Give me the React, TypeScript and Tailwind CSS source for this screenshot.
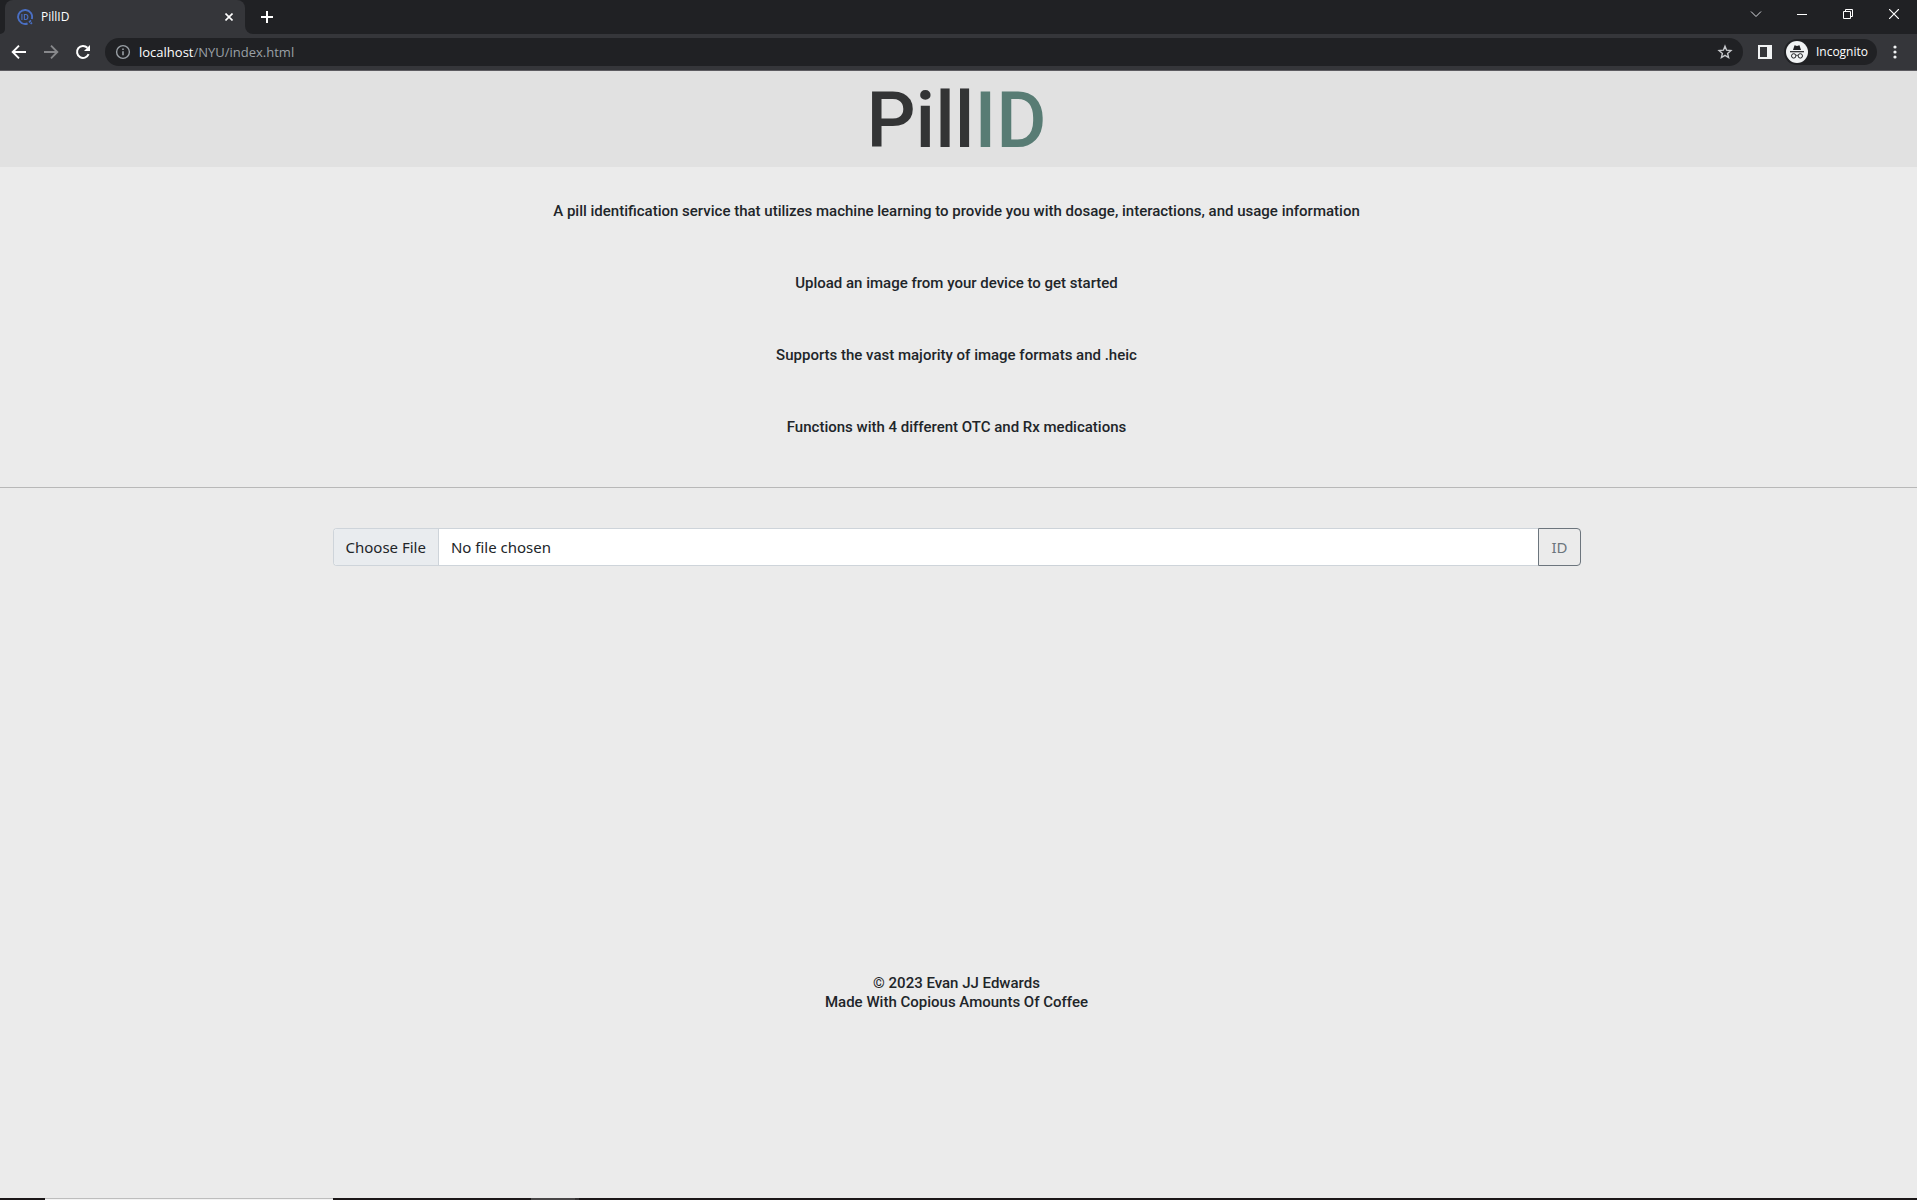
import { useState } from "react";
import type { ReactNode } from "react";

/* ── Icons ──────────────────────────────────────────────────────────── */
function Favicon() {
  return (
    <svg width="16" height="16" viewBox="0 0 16 16" fill="none" stroke="#4a6fc3">
      <path d="M14.8 10A7 7 0 1 0 10.6 14.5" strokeWidth="1.9" />
      <path d="M12 13.4l2-2M13.6 15l1.4-1.4" strokeWidth="1.6" />
      <path d="M4.9 5v6M7.4 5.5v5h1.3c1.4 0 2.2-1 2.2-2.5s-.8-2.5-2.2-2.5z" strokeWidth="1.1" />
    </svg>
  );
}

function BackIcon({ flip = false }: { flip?: boolean }) {
  return (
    <svg width="16" height="16" viewBox="0 0 16 16" fill="none" stroke="currentColor" strokeWidth="1.9" className={flip ? "-scale-x-100" : ""}>
      <path d="M15 8H2.5M8 1.7L1.7 8L8 14.3" />
    </svg>
  );
}

function ReloadIcon() {
  return (
    <svg width="16" height="16" viewBox="0 0 16 16" fill="none">
      <path d="M13.6 10.2A6 6 0 1 1 12.4 3.8" stroke="currentColor" strokeWidth="2" />
      <path d="M15 1v6H9z" fill="currentColor" />
    </svg>
  );
}

function InfoIcon() {
  return (
    <svg width="16" height="16" viewBox="0 0 16 16" fill="none" stroke="#9aa0a6">
      <circle cx="8" cy="8" r="6.4" strokeWidth="1.4" />
      <path d="M8 7.2v4M8 4.4v1.6" strokeWidth="1.6" />
    </svg>
  );
}

function StarIcon() {
  return (
    <svg width="16" height="16" viewBox="0 0 16 16" fill="none" stroke="#c7c9cc" strokeWidth="1.4">
      <path d="M8 2.2l1.6 4 4.3.4-3.3 2.8 1 4.2L8 11.4l-3.6 2.2 1-4.2-3.3-2.8 4.3-.4z" />
    </svg>
  );
}

function IncognitoIcon() {
  return (
    <svg width="22" height="22" viewBox="0 0 22 22" fill="none">
      <circle cx="11" cy="11" r="11" fill="#f1f3f4" />
      <path d="M7 9L8.3 4.9c.2-.5.6-.6 1-.5l1.7.5 1.7-.5c.5-.1.9 0 1 .5L15 9z" fill="#202124" />
      <path d="M4 10.7h14" stroke="#202124" strokeWidth="1.2" />
      <circle cx="7.7" cy="14.9" r="2.2" stroke="#202124" strokeWidth="1" />
      <circle cx="14.3" cy="14.9" r="2.2" stroke="#202124" strokeWidth="1" />
      <path d="M9.9 14.6c.7-.5 1.5-.5 2.2 0" stroke="#202124" strokeWidth="1" />
    </svg>
  );
}

/* ── Browser frame ──────────────────────────────────────────────────── */
function IconButton({ label, className = "", children }: { label: string; className?: string; children: ReactNode }) {
  return (
    <button aria-label={label} className={`flex items-center justify-center ${className}`}>
      {children}
    </button>
  );
}

function TabStrip() {
  return (
    <div className="flex h-[34px] bg-[#202124] text-white">
      <div className="flex w-[5px] items-end bg-[#35363a]">
        <span className="h-full w-full rounded-br-lg bg-[#202124]" />
      </div>
      <div className="flex w-60 items-center rounded-t-lg bg-[#35363a] pl-3 pr-2">
        <Favicon />
        <span className="ml-2 flex-1 text-xs">PillID</span>
        <IconButton label="Close tab" className="size-4">
          <svg width="8" height="8" viewBox="0 0 8 8" stroke="currentColor" strokeWidth="1.6">
            <path d="M.5.5l7 7M7.5.5l-7 7" />
          </svg>
        </IconButton>
      </div>
      <div className="w-2 bg-[#35363a]">
        <span className="block h-full w-full rounded-bl-lg bg-[#202124]" />
      </div>
      <IconButton label="New tab" className="w-7">
        <svg width="12" height="12" viewBox="0 0 12 12" stroke="currentColor" strokeWidth="2">
          <path d="M6 0v12M0 6h12" />
        </svg>
      </IconButton>
      <div className="ml-auto flex h-7">
        <IconButton label="Search tabs" className="w-[46px]">
          <svg width="12" height="12" viewBox="0 0 12 12" fill="none" stroke="#dadce0">
            <path d="M1 3.5l5 5 5-5" />
          </svg>
        </IconButton>
        <IconButton label="Minimize" className="w-[46px]">
          <svg width="10" height="10" viewBox="0 0 10 10" stroke="currentColor">
            <path d="M0 5.5h10" />
          </svg>
        </IconButton>
        <IconButton label="Restore" className="w-[46px]">
          <svg width="10" height="10" viewBox="0 0 10 10" fill="none" stroke="currentColor">
            <path d="M.5 2.5h7v7h-7zM2.5 2.5v-2h7v7h-2" />
          </svg>
        </IconButton>
        <IconButton label="Close" className="w-[46px]">
          <svg width="10" height="10" viewBox="0 0 10 10" stroke="currentColor" strokeWidth="1.2">
            <path d="M0 0l10 10M10 0L0 10" />
          </svg>
        </IconButton>
      </div>
    </div>
  );
}

function Toolbar() {
  return (
    <div className="flex h-[37px] items-center border-b border-[#5c5b60] bg-[#35363a] pl-[3px] pr-2 text-white">
      <IconButton label="Back" className="w-8">
        <BackIcon />
      </IconButton>
      <IconButton label="Forward" className="w-8 text-[#87888b]">
        <BackIcon flip />
      </IconButton>
      <IconButton label="Reload" className="w-8">
        <ReloadIcon />
      </IconButton>
      <div className="ml-[6px] flex h-7 flex-1 items-center rounded-full bg-[#202124] px-[10px]">
        <InfoIcon />
        <span className="ml-2 flex-1 text-[13px] leading-5 text-[#9aa0a6]">
          <span className="text-white">localhost</span>/NYU/index.html
        </span>
        <IconButton label="Bookmark this page">
          <StarIcon />
        </IconButton>
      </div>
      <IconButton label="Side panel" className="ml-[15px]">
        <svg width="14" height="14" viewBox="0 0 14 14">
          <path d="M0 0h14v14H0zM2 2v10h7V2z" fill="#f1f3f4" fillRule="evenodd" />
        </svg>
      </IconButton>
      <button className="ml-3 flex h-[26px] items-center gap-2 rounded-full bg-[#202124] pl-[2px] pr-[9px] text-xs">
        <IncognitoIcon />
        Incognito
      </button>
      <IconButton label="Menu" className="ml-1 w-7">
        <svg width="4" height="14" viewBox="0 0 4 14" fill="#f1f3f4">
          <circle cx="2" cy="2" r="1.6" />
          <circle cx="2" cy="7" r="1.6" />
          <circle cx="2" cy="12" r="1.6" />
        </svg>
      </IconButton>
    </div>
  );
}

/* ── Page ───────────────────────────────────────────────────────────── */
const INTRO = [
  "A pill identification service that utilizes machine learning to provide you with dosage, interactions, and usage information",
  "Upload an image from your device to get started",
  "Supports the vast majority of image formats and .heic",
  "Functions with 4 different OTC and Rx medications",
];

function UploadForm() {
  const [hasFile, setHasFile] = useState(false);

  return (
    <form className="mx-auto flex w-full max-w-[1248px] font-['Noto_Sans',sans-serif] text-[15px] font-normal leading-6">
      <input
        type="file"
        aria-label="Pill image"
        onChange={(e) => setHasFile(Boolean(e.target.files?.length))}
        className="h-[38px] min-w-0 flex-1 rounded-l border border-r-0 border-[#ced4da] bg-white text-[#212529] file:mr-3 file:h-9 file:border-r file:border-[#ced4da] file:bg-[#e9ecef] file:px-3"
      />
      <button
        type="submit"
        disabled={!hasFile}
        className="h-[38px] rounded-r border border-[#6c757d] px-3 text-[#6c757d]"
      >
        ID
      </button>
    </form>
  );
}

/* Sliver of the desktop taskbar under the window */
function Taskbar() {
  return (
    <div className="flex h-[2px] bg-[#1b1718]">
      <span className="ml-[45px] w-72 border-t border-[#bdbdbd] bg-[#f3f3f3]" />
      <span className="ml-[198px] w-11 bg-[#484647]" />
      <span className="w-1 bg-[#343233]" />
    </div>
  );
}

export default function App() {
  return (
    <div className="flex min-h-screen flex-col bg-[#ebebeb] font-['Open_Sans','Noto_Sans',sans-serif]">
      <TabStrip />
      <Toolbar />
      <div className="flex flex-1 flex-col font-[Roboto,sans-serif] text-[15px] font-medium text-[#212529]">
        <header className="bg-[#e1e1e1] pr-1 pt-1 text-center">
          <h1 className="text-[77px] leading-[92px] text-[#333435]">
            Pill<span className="text-[#587c74]">ID</span>
          </h1>
        </header>
        <main>
          <div className="border-b border-[#b8b8b8] pb-6 pr-1 pt-2 text-center">
            {INTRO.map((line) => (
              <p key={line} className="py-6 leading-6">
                {line}
              </p>
            ))}
          </div>
          <div className="pr-1 pt-10">
            <UploadForm />
          </div>
        </main>
        <footer className="mb-[186px] mt-auto pr-1 text-center leading-[19px]">
          <p>© 2023 Evan JJ Edwards</p>
          <p>Made With Copious Amounts Of Coffee</p>
        </footer>
      </div>
      <Taskbar />
    </div>
  );
}
